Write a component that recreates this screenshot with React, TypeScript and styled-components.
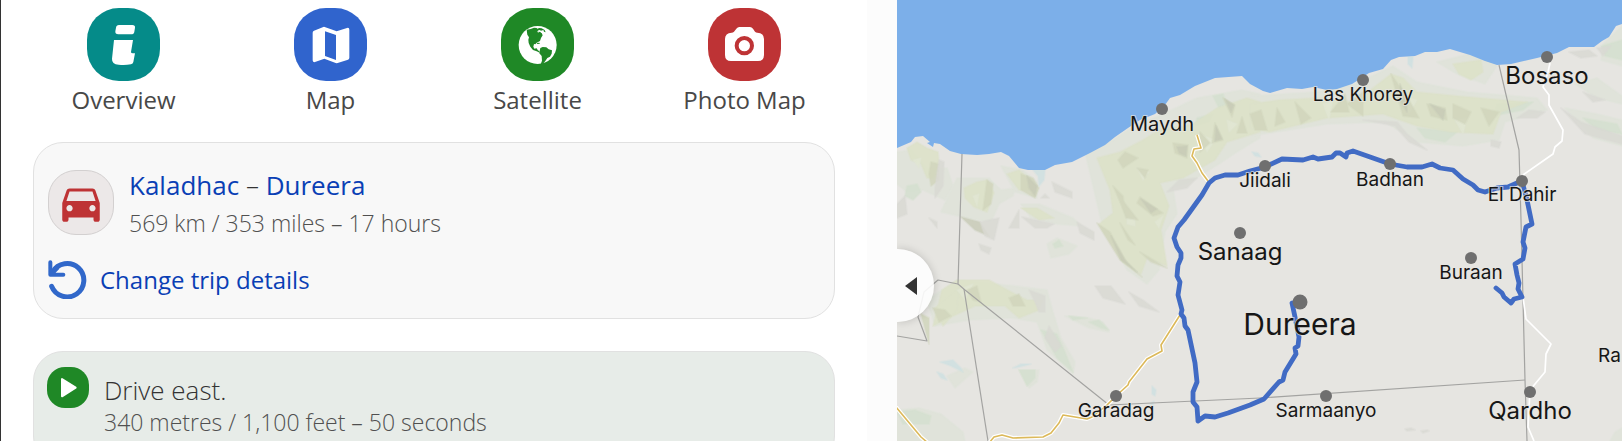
import React from "react";
import styled, { createGlobalStyle } from "styled-components";
import { MdDirectionsCar } from "react-icons/md";

const GlobalStyle = createGlobalStyle`
  * { box-sizing: border-box; }
  body {
    margin: 0;
    background: #fcfcfc;
    color: #333;
    font-family: "Open Sans", "Noto Sans", sans-serif;
  }
`;

const Page = styled.div`
  display: grid;
  grid-template-columns: minmax(0, 867fr) 30px minmax(0, 725fr);
  height: 100vh;
  overflow: hidden;
`;

const Panel = styled.main`
  display: flex;
  flex-direction: column;
  gap: 32px;
  overflow: hidden;
  padding: 8px 32px 0;
  border-left: 1px solid #333;
  background: #fff;
`;

const Nav = styled.nav`
  display: grid;
  grid-template-columns: repeat(4, minmax(0, 1fr));
  margin: 0 -13px -9px;
`;

const NavLink = styled.a`
  display: flex;
  flex-direction: column;
  align-items: center;
  color: #484848;
  font-size: 24px;
  line-height: 38px;
  text-decoration: none;
  white-space: nowrap;
`;

const NavIcon = styled.span<{ $color: string }>`
  width: 73px;
  height: 73px;
  border-radius: 32px;
  background: ${(p) => p.$color};
  svg { display: block; }
`;

const Card = styled.section<{ $tone?: "step" }>`
  flex: none;
  display: flex;
  flex-direction: column;
  gap: 20px;
  padding: ${(p) => (p.$tone ? "15px 14px 26px 13px" : "21px 14px 19px")};
  border: 1px solid #e1e1e1;
  border-radius: 30px;
  background: ${(p) => (p.$tone ? "#e7ece8" : "#f8f8f8")};
`;

const Row = styled.div`
  display: flex;
  align-items: flex-start;
  gap: 15px;
`;

const CarTile = styled.span`
  flex: none;
  display: grid;
  place-items: center;
  width: 66px;
  height: 65px;
  margin-top: 6px;
  border: 1px solid #d3d0d0;
  border-radius: 28px;
  background: #ece8e8;
  color: #be3335;
`;

const PlayTile = styled.span`
  flex: none;
  width: 42px;
  height: 41px;
  border-radius: 18px;
  background: #1f8826;
  svg { display: block; }
`;

const Title = styled.h1`
  margin: 0;
  font-size: 26px;
  font-weight: 400;
  line-height: 42px;
`;

const Dash = styled.span`
  font-weight: 300;
`;

const TextLink = styled.a`
  color: #0a3fb5;
  text-decoration: none;
`;

const ChangeLink = styled(TextLink)`
  display: flex;
  align-items: center;
  gap: 13px;
  font-size: 24px;
  line-height: 38px;
  svg { flex: none; }
`;

const Instruction = styled.p`
  margin: 8px 0 0;
  font-size: 26px;
  font-weight: 300;
  line-height: 30px;
`;

const Detail = styled.p`
  margin: 0;
  color: #505050;
  font-size: 23px;
  font-weight: 300;
  line-height: 34px;
`;

const MapPane = styled.section`
  position: relative;
  overflow: hidden;
  background: #e6e5e1;
`;

const MapSvg = styled.svg`
  display: block;
  width: 100%;
  height: 100%;
  font-family: Inter, "Liberation Sans", sans-serif;
`;

const Collapse = styled.button`
  position: absolute;
  top: 249px;
  left: 0;
  width: 37px;
  height: 73px;
  padding: 0 0 0 8px;
  border: 0;
  border-radius: 0 37px 37px 0;
  background: rgba(255, 255, 255, 0.88);
  box-shadow: 0 0 8px rgba(0, 0, 0, 0.18);
  cursor: pointer;
  svg { display: block; }
`;

const InfoIcon = () => (
  <svg width="73" height="73" viewBox="0 0 219 219" fill="#fff" aria-hidden="true">
    <path d="M96 51h40q9 0 8 8l-2 12q-1 8-10 8H94q-10 0-9-9l2-11q1-8 9-8Z" />
    <path d="M81 96h57l-6 36q0 4 5 4h7l-5 26q-1 6-7 7-19 3-37 1-21-2-20-18l6-56Z" />
  </svg>
);

const FoldedMapIcon = () => (
  <svg width="73" height="73" viewBox="0 0 219 219" fill="#fff" aria-hidden="true">
    <path
      fillRule="evenodd"
      d="M92 57l36 13 31-10q7-2 7 5v84q0 4-4 6l-31 10q-3 1-6 0l-34-13-28 10q-7 2-7-5V74q0-4 4-6l28-11q2-1 4 0ZM93 70v74l33 12V81Z"
    />
  </svg>
);

const GlobeIcon = () => (
  <svg width="73" height="73" viewBox="0 0 219 219" aria-hidden="true">
    <circle cx="110" cy="111" r="57" fill="#fff" />
    <g fill="#1f8826">
      <path d="M77 65l12-2 10-4 8 1 4 7-2 5 5 2 8 1 3 7-5 8-3 9-10 5-4 5-4-1-2 8 3 6 7-1 3 5 5 4 1 4-9-4-11-4-8-10-5-11-1-10 2-7-5-8Z" />
      <path d="M107 63l8-3 7 1 9 5 3 7-5-2-2-5-7 2-4-2-7 2ZM112 71l7 1 1 6-6-2Z" />
      <path d="M118 120l7-3 11 1 7 6 10 3-1 10-5 9-8 4-6 9-7 8-7 2 4-11-1-14-7-8 1-7Z" />
      <path d="M107 105l8-1 2 3-8 1Z" />
    </g>
  </svg>
);

const CameraIcon = () => (
  <svg width="73" height="73" viewBox="0 0 219 219" aria-hidden="true">
    <path
      fill="#fff"
      d="M94 57h32q5 0 9 5l6 9q3 3 7 3 20 1 20 19v48q0 18-18 18H69q-18 0-18-18V93q0-18 20-19 4 0 7-3l7-9q4-5 9-5Z"
    />
    <circle cx="109" cy="113" r="23" fill="#fff" stroke="#be3335" strokeWidth="12" />
  </svg>
);

const UndoIcon = () => (
  <svg width="39" height="39" viewBox="0 0 117 117" fill="none" stroke="#3168ca" strokeLinecap="round" strokeLinejoin="round" aria-hidden="true">
    <path strokeWidth="15" d="M11 79A50 50 0 1 0 14 36" />
    <path strokeWidth="12" d="M7 7v37h39M10 42l18-18" />
  </svg>
);

const PlayIcon = () => (
  <svg width="42" height="41" viewBox="0 0 126 123" fill="#fff" stroke="#fff" strokeWidth="6" strokeLinejoin="round" aria-hidden="true">
    <path d="M45 36v52l41-26Z" />
  </svg>
);

const NAV = [
  { label: "Overview", color: "#058b89", icon: <InfoIcon /> },
  { label: "Map", color: "#3064cd", icon: <FoldedMapIcon /> },
  { label: "Satellite", color: "#1f8826", icon: <GlobeIcon /> },
  { label: "Photo Map", color: "#be3335", icon: <CameraIcon /> },
];

const SEA =
  "M0 0V148L14 142 18 137 26 136 33 142 30 143 36 147 37 143 43 144 53 151 64 154 80 155 92 154 104 152 112 156 122 168 131 170 148 170 158 165 175 162 193 153 208 145 218 137 231 128 243 120 258 114 268 105 273 98 283 95 298 86 318 78 345 76 353 84 366 91 373 93 390 88 405 89 416 87 430 90 440 89 455 84 466 77 472 73 486 69 494 60 502 57 518 56 528 52 540 52 553 49 573 55 588 61 600 65 614 64 640 58 660 53 672 47 697 47 705 41 712 37 719 26 725 24V0Z";

const TERRAIN: { fill: string; shapes: string[] }[] = [
  {
    fill: "#dfe3d9",
    shapes: [
      "0,152 14,150 30,168 50,168 56,186 48,200 26,190 10,192 0,184",
      "54,190 60,178 92,178 104,190 118,188 116,196 102,204 94,222 70,218 44,212",
      "104,166 126,170 140,182 140,198 118,192",
      "124,204 142,204 176,218 184,226 160,224 134,218",
      "188,152 216,140 240,124 262,116 300,98 345,90 363,94 363,138 340,152 322,164 290,184 276,188 280,214 268,232 262,270 250,284 230,270 214,240 204,220",
      "353,96 420,92 458,84 496,66 520,82 570,92 640,98 650,110 608,122 602,140 566,146 520,142 488,122 430,124 353,136",
      "540,62 580,52 600,66 588,84 560,74",
      "38,326 30,300 60,280 118,286 150,290 156,312 164,338 178,362 176,374 150,350 140,322 114,318 72,320",
      "0,410 22,408 44,414 66,432 68,441 0,441",
      "122,370 142,370 140,382 132,388",
      "168,316 192,318 206,322 212,332 192,328",
      "150,244 160,238 180,246 172,254 154,258",
      "668,108 700,114 725,120 725,146 696,138",
      "706,44 725,26 725,66 704,60",
      "50,376 68,368 76,372 58,388",
      "713,441 718,432 725,428 725,441",
      "678,84 700,78 725,96 725,104 700,98",
    ],
  },
  {
    fill: "#d5e0d0",
    shapes: [
      "10,186 20,184 24,192 16,200 8,196",
      "156,244 162,240 166,246 158,248",
      "0,412 18,410 34,416 32,424 6,424",
      "122,370 138,370 138,378 130,386",
      "172,316 190,318 176,320",
      "192,322 202,320 212,330 204,328",
      "144,330 160,334 168,352 176,372 160,358",
      "316,96 326,94 330,104 322,108",
      "704,46 725,40 725,60 708,56",
      "686,118 720,124 725,134 700,130",
      "600,104 636,102 626,110 596,116",
      "520,128 560,132 548,142 528,138",
      "300,118 316,114 312,122 298,126",
    ],
  },
  {
    fill: "#dde2c8",
    shapes: [
      "10,148 20,142 30,148 41,152 42,162 36,178 30,178 24,164 14,160",
      "67,188 80,182 90,180 97,193 90,212 77,207 68,198",
      "110,174 122,170 136,182 138,190 122,190",
      "124,208 140,208 157,218 142,220",
      "200,158 223,152 246,140 262,130 296,124 320,108 350,98 363,102 363,132 330,142 318,160 286,178 263,183 272,206 264,230 270,266 250,258 244,274 226,262 202,224 216,213 213,190",
      "353,104 382,100 420,98 458,102 494,74 506,78 520,92 560,96 630,102 604,112 596,134 554,132 520,126 486,114 430,118 372,132 353,128",
      "556,64 584,60 586,72 574,80 562,74",
      "45,290 60,280 92,280 118,294 130,300 146,300 142,310 122,318 108,306 78,306 52,318 36,326",
      "38,308 62,288 60,310 46,326",
    ],
  },
  {
    fill: "#e2e7d4",
    shapes: [
      "16,160 24,158 22,168",
      "230,218 238,218 238,226 230,224",
      "258,222 266,216 262,228",
      "240,168 252,172 246,180",
      "60,290 76,284 68,300",
      "302,134 318,140 310,152",
      "426,104 436,100 432,120",
      "506,96 520,100 512,114",
      "558,120 570,118 566,134",
      "330,120 340,124 332,132",
      "76,196 82,194 80,206",
    ],
  },
  {
    fill: "#d2d6bd",
    shapes: [
      "34,162 42,164 42,180 34,186 32,174",
      "90,180 96,184 94,204 86,210",
      "124,174 136,178 142,188 138,198 124,190",
      "243,197 266,213 256,216 240,203",
      "220,193 241,220 229,218",
      "223,223 238,245 231,240",
      "243,252 270,268 254,262",
      "200,223 213,232 230,263 245,277 223,260",
      "276,143 291,145 290,158 278,153",
      "303,132 313,143 303,152",
      "318,123 326,140 315,143",
      "345,117 350,133 340,133",
      "326,98 338,105 335,117",
      "228,152 241,158 226,168 221,160",
      "240,168 251,170 248,178",
      "216,186 226,196 228,212",
      "353,114 364,110 370,130 358,130",
      "380,108 388,122 378,126",
      "398,102 414,118 404,124",
      "434,112 448,94 452,112",
      "450,104 466,92 466,116",
      "494,74 512,100 522,118 506,116",
      "530,104 548,108 550,120 534,116",
      "556,104 574,112 568,124 556,118",
      "584,108 602,112 592,126",
      "70,290 80,286 84,302 76,300",
      "36,308 48,310 54,316 42,322",
      "24,314 32,318 32,344",
      "112,298 122,294 128,306 116,306",
    ],
  },
  {
    fill: "#c9ccb8",
    shapes: [
      "280,147 290,146 289,156 282,153",
      "319,126 325,139 318,141",
      "328,99 337,105 334,112",
      "244,199 260,209 254,213",
      "503,84 510,102 510,112 504,102",
      "533,104 548,110 546,120",
      "214,236 228,260 240,272 224,260",
      "130,176 140,186 138,196 132,188",
      "64,217 83,222 92,236 78,230",
    ],
  },
  {
    fill: "#dadad4",
    shapes: [
      "0,204 8,196 10,214 0,218",
      "42,160 47,162 46,186 38,198 38,188",
      "32,218 40,222 40,228",
      "83,222 102,218 97,240 88,236",
      "155,182 175,192 175,198 158,192",
      "144,198 148,194 152,198",
      "122,210 122,228 112,228",
      "125,217 157,224 150,228 138,228",
      "180,222 197,232 197,240 183,233",
      "132,290 148,296 148,312 142,312 138,302",
      "152,326 164,346 158,352 148,338",
      "198,286 214,286 228,304 206,298",
      "232,292 246,300 262,312 242,306",
      "282,180 300,178 290,188 270,192",
      "82,244 94,248 92,254 84,250",
      "466,120 500,122 510,134 530,150 512,142 498,126",
      "620,118 632,110 648,112 640,118",
      "594,140 604,142 602,148 594,146",
      "664,108 684,122 725,136 725,144 688,134",
      "672,52 692,50 700,56 684,58",
      "686,92 708,100 696,102",
      "700,48 714,46 706,56",
      "508,429 514,428 518,430 510,431",
      "524,431 530,430 532,431 526,433",
    ],
  },
  {
    fill: "#cfe1e2",
    shapes: [
      "136,170 148,170 147,180 142,186 141,176",
      "43,362 56,360 64,368 66,372 54,366",
      "40,372 46,374 50,380 44,378",
      "116,368 124,364 134,364 122,367",
      "255,386 259,390 258,396 255,394",
      "253,404 257,401 256,406",
      "511,57 516,57 515,68 511,64",
      "355,152 361,153 364,157 358,156",
    ],
  },
];

const BORDERS = [
  "65,154 61,284 68,290 212,405 363,398 628,380",
  "61,284 41,280 27,292 21,317 30,341 0,336",
  "67,289 91,441",
  "602,65 622,150 624,220 628,380 630,441",
];

const MAIN_ROADS = [
  "300,135 304,148 297,149 295,156 300,163 305,173 311,181",
  "283,315 264,345 265,351 250,359 232,382 231,385 220,395 210,405 195,417 190,419 166,415 162,423 154,433 146,437 116,438 105,435 97,437 92,443",
  "-1,407 24,437 31,443",
];

const MINOR_ROADS = [
  "653,63 651,72 646,87 652,95 652,105 666,130 665,141 658,147 656,154 626,175",
  "626,297 629,319 641,331 654,344 649,354 648,372 633,390 631,427 637,441",
];

const ROUTE =
  "395,303 398,317 402,337 401,346 398,348 399,354 388,372 386,380 382,382 367,399 353,405 331,413 318,417 308,416 301,421 300,407 296,402 296,392 300,382 298,363 291,330 288,326 287,318 284,314 285,310 281,295 283,282 280,276 281,265 284,258 284,253 280,247 277,238 281,227 287,220 305,195 312,183 318,178 328,175 341,175 353,171 368,167 385,159 406,160 416,157 421,159 435,157 439,153 443,153 449,157 450,153 456,151 493,164 510,167 525,167 535,164 543,168 556,170 566,179 576,185 581,190 588,192 600,188 611,187 620,183 625,181 630,200 635,224 629,227 626,242 628,248 626,259 618,264 620,275 622,283 621,289 625,297 617,299 614,303 607,297 605,293 599,288";

const PLACES = [
  { name: "Maydh", x: 265, y: 109, base: 131, size: 20 },
  { name: "Las Khorey", x: 466, y: 80, base: 101, size: 19 },
  { name: "Bosaso", x: 650, y: 57, base: 84, size: 24 },
  { name: "Jiidali", x: 368, y: 166, base: 187, size: 19 },
  { name: "Badhan", x: 493, y: 164, base: 186, size: 19 },
  { name: "El Dahir", x: 625, y: 181, base: 201, size: 19 },
  { name: "Sanaag", x: 343, y: 233, base: 260, size: 24 },
  { name: "Buraan", x: 574, y: 258, base: 279, size: 19 },
  { name: "Dureera", x: 403, y: 302, base: 335, size: 30 },
  { name: "Garadag", x: 219, y: 396, base: 417, size: 19 },
  { name: "Sarmaanyo", x: 429, y: 396, base: 417, size: 19 },
  { name: "Qardho", x: 633, y: 392, base: 419, size: 24 },
];

const RegionMap = () => (
  <MapSvg viewBox="0 0 725 441" preserveAspectRatio="xMidYMid slice" role="img" aria-label="Route map">
    <rect width="725" height="441" fill="#e6e5e1" />
    {TERRAIN.map((layer) => (
      <g key={layer.fill} fill={layer.fill} stroke={layer.fill} strokeOpacity="0.4" strokeWidth="2" strokeLinejoin="round" opacity="0.85">
        {layer.shapes.map((s) => (
          <polygon key={s} points={s} />
        ))}
      </g>
    ))}
    <path d={SEA} fill="#7cafe9" />
    <g fill="none" strokeLinejoin="round">
      {BORDERS.map((p) => (
        <polyline key={p} points={p} stroke="#a3a3a1" strokeWidth="1.2" />
      ))}
      {MINOR_ROADS.map((p) => (
        <polyline key={p} points={p} stroke="#fff" strokeWidth="1.7" />
      ))}
      {MAIN_ROADS.map((p) => (
        <polyline key={p} points={p} stroke="#fff" strokeWidth="4" />
      ))}
      {MAIN_ROADS.map((p) => (
        <polyline key={p} points={p} stroke="#dcb95a" strokeWidth="1.6" />
      ))}
      <polyline points={ROUTE} stroke="#416bc4" strokeWidth="4.8" strokeLinecap="round" />
    </g>
    {PLACES.map((p) => (
      <circle key={p.name} cx={p.x} cy={p.y} r={p.size === 30 ? 7.5 : 6} fill="#6f6f6f" />
    ))}
    <g fill="#161616" stroke="#e6e5e1" strokeOpacity="0.7" strokeWidth="2" paintOrder="stroke" textAnchor="middle">
      {PLACES.map((p) => (
        <text key={p.name} x={p.x} y={p.base} fontSize={p.size}>
          {p.name}
        </text>
      ))}
      <text x="701" y="362" fontSize="19" textAnchor="start">
        Ra
      </text>
    </g>
  </MapSvg>
);

export default function App() {
  return (
    <>
      <GlobalStyle />
      <Page>
        <Panel>
          <Nav>
            {NAV.map((item) => (
              <NavLink key={item.label} href="#">
                <NavIcon $color={item.color}>{item.icon}</NavIcon>
                {item.label}
              </NavLink>
            ))}
          </Nav>
          <Card>
            <Row>
              <CarTile>
                <MdDirectionsCar size={50} aria-hidden="true" />
              </CarTile>
              <div>
                <Title>
                  <TextLink href="#">Kaladhac</TextLink> <Dash>–</Dash> <TextLink href="#">Dureera</TextLink>
                </Title>
                <Detail>569 km / 353 miles – 17 hours</Detail>
              </div>
            </Row>
            <ChangeLink href="#">
              <UndoIcon />
              Change trip details
            </ChangeLink>
          </Card>
          <Card $tone="step">
            <Row>
              <PlayTile>
                <PlayIcon />
              </PlayTile>
              <div>
                <Instruction>Drive east.</Instruction>
                <Detail>340 metres / 1,100 feet – 50 seconds</Detail>
              </div>
            </Row>
          </Card>
        </Panel>
        <div />
        <MapPane>
          <RegionMap />
          <Collapse type="button" aria-label="Hide panel">
            <svg width="12" height="18" viewBox="0 0 12 18" fill="#333" aria-hidden="true">
              <path d="M0 9 12 0V18Z" />
            </svg>
          </Collapse>
        </MapPane>
      </Page>
    </>
  );
}
